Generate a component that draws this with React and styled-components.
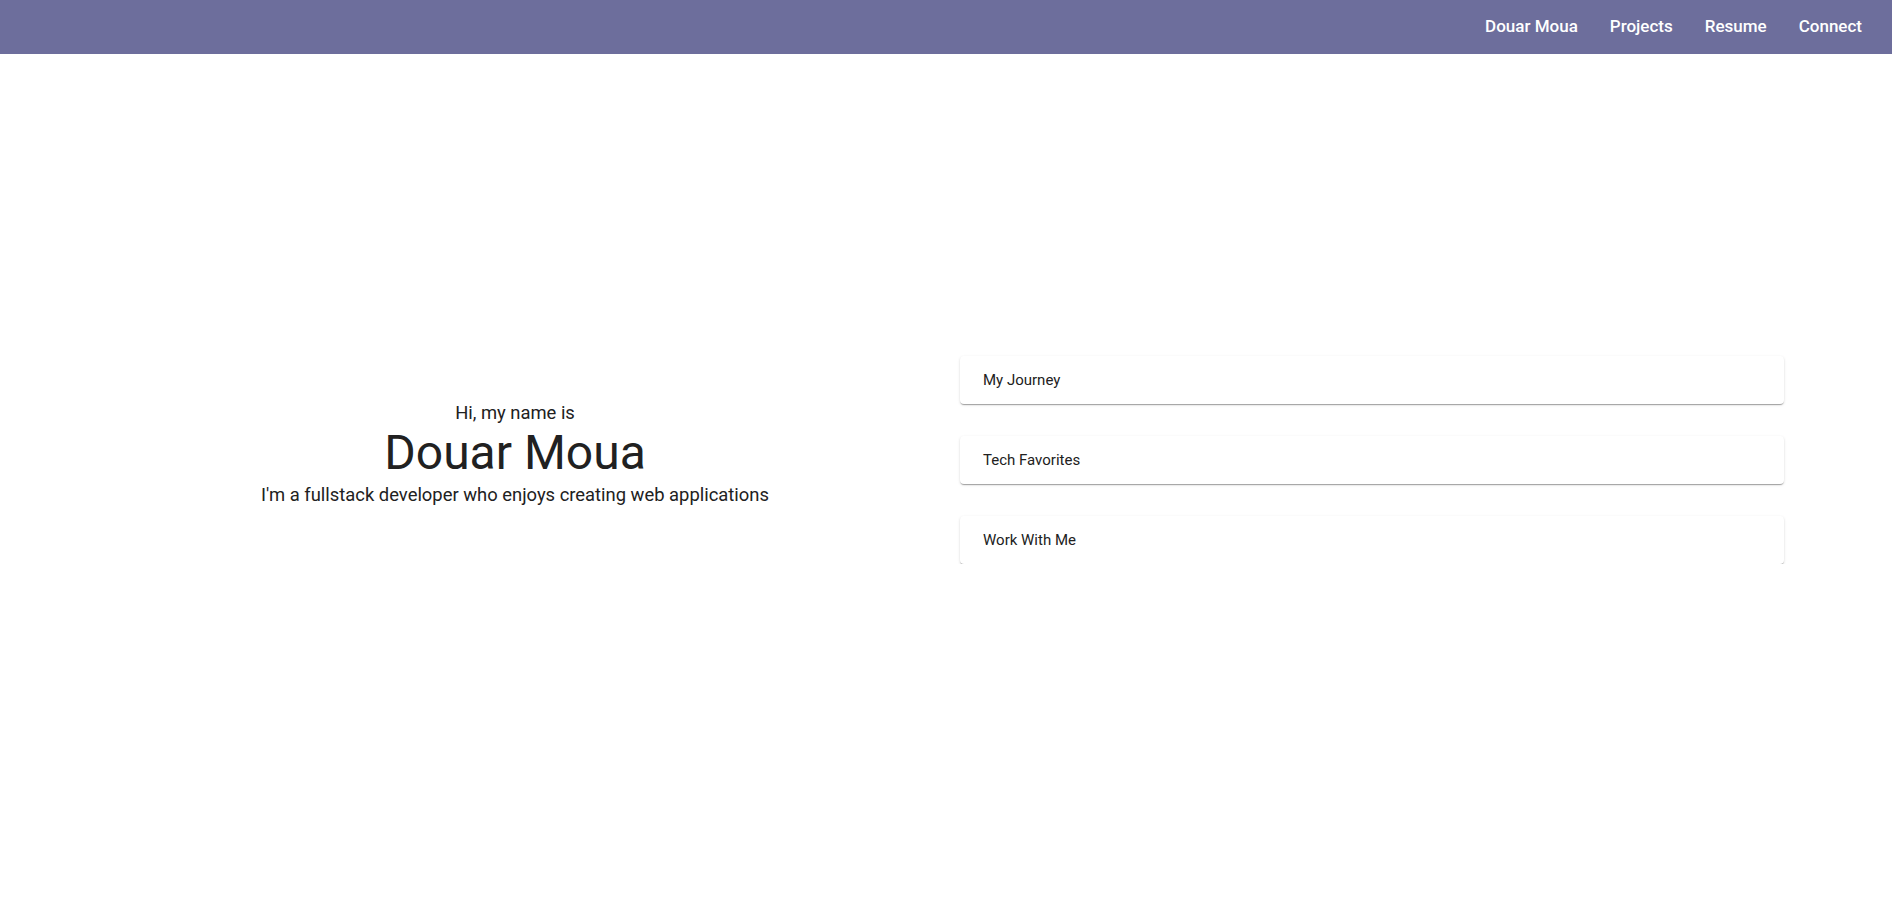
import React from 'react'
import styled, { createGlobalStyle } from 'styled-components'

const GlobalStyle = createGlobalStyle`
    body {
        margin: 0;
        background: #ffffff;
        font-family: Roboto, "Liberation Sans", sans-serif;
        color: rgba(0, 0, 0, 0.87);
    }
`

const NavBar = styled.header`
    height: 54px;
    background: #6d6e9c;
    display: flex;
    align-items: center;
    justify-content: flex-end;
    padding: 0 30px 2px 0;
    box-sizing: border-box;
    gap: 32px;
`

const NavLink = styled.a`
    color: #ffffff;
    font-size: 17px;
    font-weight: 500;
    text-decoration: none;
    cursor: pointer;
`

const Main = styled.main`
    display: grid;
    grid-template-columns: 960px 824px;
    align-items: center;
    padding-top: 302px;
`

const Intro = styled.section`
    display: flex;
    flex-direction: column;
    align-items: center;
    padding-left: 70px;
    margin-bottom: 11px;
    text-align: center;
    color: #212121;
`

const Greeting = styled.p`
    margin: 0;
    font-size: 18.4px;
    line-height: 1.25;
`

const Name = styled.h1`
    margin: 0;
    font-size: 48px;
    font-weight: 400;
    line-height: 1.2;
`

const Tagline = styled.p`
    margin: 0;
    font-size: 18.4px;
    line-height: 1.4;
`

const Panels = styled.section`
    display: flex;
    flex-direction: column;
    gap: 32px;
`

const Panel = styled.div`
    height: 48px;
    display: flex;
    align-items: center;
    padding: 0 23px;
    background: #ffffff;
    border-radius: 4px;
    box-shadow: 0px 2px 1px -1px rgba(0,0,0,0.2), 0px 1px 1px 0px rgba(0,0,0,0.14), 0px 1px 3px 0px rgba(0,0,0,0.12);
    font-size: 15px;
    font-weight: 400;
    color: #212121;
    cursor: pointer;
`

const App = () => {
    const links = ['Douar Moua', 'Projects', 'Resume', 'Connect']
    const panels = ['My Journey', 'Tech Favorites', 'Work With Me']

    return (
        <>
            <GlobalStyle/>
            <NavBar>
                {links.map(l => <NavLink key={l}>{l}</NavLink>)}
            </NavBar>
            <Main>
                <Intro>
                    <Greeting>Hi, my name is</Greeting>
                    <Name>Douar Moua</Name>
                    <Tagline>I'm a fullstack developer who enjoys creating web applications</Tagline>
                </Intro>
                <Panels>
                    {panels.map(p => <Panel key={p}>{p}</Panel>)}
                </Panels>
            </Main>
        </>
    )
}

export default App
